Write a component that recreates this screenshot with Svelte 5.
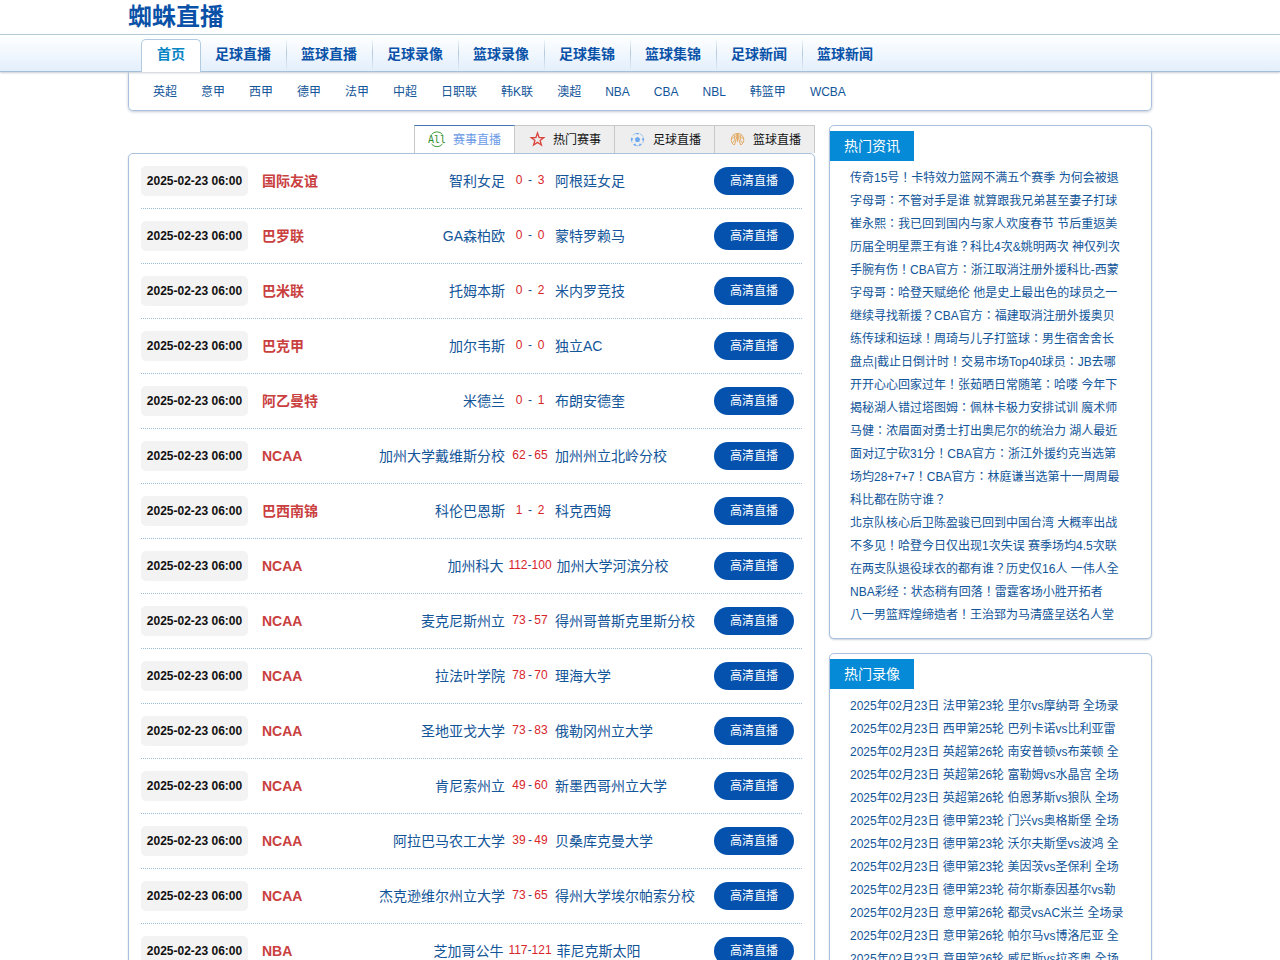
<script>
  const nav = ['首页', '足球直播', '篮球直播', '足球录像', '篮球录像', '足球集锦', '篮球集锦', '足球新闻', '篮球新闻'];
  const leagues = ['英超', '意甲', '西甲', '德甲', '法甲', '中超', '日职联', '韩K联', '澳超', 'NBA', 'CBA', 'NBL', '韩篮甲', 'WCBA'];
  const tabs = [
    { icon: 'all', label: '赛事直播' },
    { icon: 'star', label: '热门赛事' },
    { icon: 'football', label: '足球直播' },
    { icon: 'basketball', label: '篮球直播' }
  ];
  let active = $state(0);
  const date = '2025-02-23 06:00';
  const matches = [
    ['国际友谊', '智利女足', 0, 3, '阿根廷女足'],
    ['巴罗联', 'GA森柏欧', 0, 0, '蒙特罗赖马'],
    ['巴米联', '托姆本斯', 0, 2, '米内罗竞技'],
    ['巴克甲', '加尔韦斯', 0, 0, '独立AC'],
    ['阿乙曼特', '米德兰', 0, 1, '布朗安德奎'],
    ['NCAA', '加州大学戴维斯分校', 62, 65, '加州州立北岭分校'],
    ['巴西南锦', '科伦巴恩斯', 1, 2, '科克西姆'],
    ['NCAA', '加州科大', 112, 100, '加州大学河滨分校'],
    ['NCAA', '麦克尼斯州立', 73, 57, '得州哥普斯克里斯分校'],
    ['NCAA', '拉法叶学院', 78, 70, '理海大学'],
    ['NCAA', '圣地亚戈大学', 73, 83, '俄勒冈州立大学'],
    ['NCAA', '肯尼索州立', 49, 60, '新墨西哥州立大学'],
    ['NCAA', '阿拉巴马农工大学', 39, 49, '贝桑库克曼大学'],
    ['NCAA', '杰克逊维尔州立大学', 73, 65, '得州大学埃尔帕索分校'],
    ['NBA', '芝加哥公牛', 117, 121, '菲尼克斯太阳']
  ];
  const panels = [
    {
      title: '热门资讯',
      items: [
        '传奇15号！卡特效力篮网不满五个赛季 为何会被退',
        '字母哥：不管对手是谁 就算跟我兄弟甚至妻子打球',
        '崔永熙：我已回到国内与家人欢度春节 节后重返美',
        '历届全明星票王有谁？科比4次&姚明两次 神仅列次',
        '手腕有伤！CBA官方：浙江取消注册外援科比-西蒙',
        '字母哥：哈登天赋绝伦 他是史上最出色的球员之一',
        '继续寻找新援？CBA官方：福建取消注册外援奥贝',
        '练传球和运球！周琦与儿子打篮球：男生宿舍舍长',
        '盘点|截止日倒计时！交易市场Top40球员：JB去哪',
        '开开心心回家过年！张茹晒日常随笔：哈喽 今年下',
        '揭秘湖人错过塔图姆：佩林卡极力安排试训 魔术师',
        '马健：浓眉面对勇士打出奥尼尔的统治力 湖人最近',
        '面对辽宁砍31分！CBA官方：浙江外援约克当选第',
        '场均28+7+7！CBA官方：林庭谦当选第十一周周最',
        '科比都在防守谁？',
        '北京队核心后卫陈盈骏已回到中国台湾 大概率出战',
        '不多见！哈登今日仅出现1次失误 赛季场均4.5次联',
        '在两支队退役球衣的都有谁？历史仅16人 一伟人全',
        'NBA彩经：状态稍有回落！雷霆客场小胜开拓者',
        '八一男篮辉煌缔造者！王治郅为马清盛呈送名人堂'
      ]
    },
    {
      title: '热门录像',
      items: [
        '法甲第23轮 里尔vs摩纳哥 全场录',
        '西甲第25轮 巴列卡诺vs比利亚雷',
        '英超第26轮 南安普顿vs布莱顿 全',
        '英超第26轮 富勒姆vs水晶宫 全场',
        '英超第26轮 伯恩茅斯vs狼队 全场',
        '德甲第23轮 门兴vs奥格斯堡 全场',
        '德甲第23轮 沃尔夫斯堡vs波鸿 全',
        '德甲第23轮 美因茨vs圣保利 全场',
        '德甲第23轮 荷尔斯泰因基尔vs勒',
        '意甲第26轮 都灵vsAC米兰 全场录',
        '意甲第26轮 帕尔马vs博洛尼亚 全',
        '意甲第26轮 威尼斯vs拉齐奥 全场'
      ].map((t) => '2025年02月23日 ' + t)
    }
  ];
</script>

<header class="wrap"><h1>蜘蛛直播</h1></header>
<nav class="main-nav">
  <div class="wrap nav-items">
    {#each nav as item, i}
      <a href="#top" class:current={i === 0}>{item}</a>
    {/each}
  </div>
</nav>
<div class="wrap">
  <nav class="sub-nav">
    {#each leagues as item}<a href="#top">{item}</a>{/each}
  </nav>
  <div class="columns">
    <main>
      <div class="tabs">
        {#each tabs as tab, i}
          <button class="tab" class:active={active === i} onclick={() => (active = i)}>
            {#if tab.icon === 'all'}
              <svg class="icon" viewBox="0 0 18 18" fill="none" stroke="#3f9f3c" aria-hidden="true">
                <path d="M3.500 4.500A7 7 0 0 1 14.500 4.500M3.500 14A7 7 0 0 0 14.500 14" />
                <text x="9" y="13" text-anchor="middle" font-family="DejaVu Sans Mono, monospace" font-size="10" fill="#2f8f2e" stroke="none">All</text>
              </svg>
            {:else if tab.icon === 'star'}
              <svg class="icon" viewBox="0 0 18 18" fill="none" stroke="#d9443c" stroke-width="1.300">
                <path d="m9.500 3 1.600 4.500 4.700.1-3.700 2.900 1.300 4.500-3.900-2.600L5.600 15l1.300-4.500-3.700-2.900 4.700-.1z" />
              </svg>
            {:else if tab.icon === 'football'}
              <svg class="icon" viewBox="0 0 18 18" fill="#6faaf0">
                <circle cx="9.500" cy="9.500" r="6.200" fill="none" stroke="#9cc3ef" stroke-dasharray="4 3.800" />
                <path transform="translate(.5 .5)" d="m9 6.300 2.700 2-1 3.100H7.300l-1-3.100zM7 2.500h4L9 4.300zM2.600 7l2 1-.9 2.600-1.300-.9zM15.400 7l-2 1 .9 2.600 1.300-.9zM4.600 13.700l2.200-.7 1 2.300-1.300.2zM13.400 13.700l-2.200-.7-1 2.300 1.300.2z" />
              </svg>
            {:else}
              <svg class="icon" viewBox="0 0 18 18" fill="none" stroke="#e2aa62">
                <path d="M6 15A6.300 6.300 0 1 1 13 15M9.500 3.500V12M9.500 4 6.500 15M9.500 4l3 11M3.500 8.500C6.500 7.500 8.500 6 9.500 3.500c1 2.500 3 4 6 5M6 4.500C7.500 8 6.500 11 4.500 13M13 4.500c-1.500 3.500-.5 6.500 1.500 8.500" />
              </svg>
            {/if}
            <span>{tab.label}</span>
          </button>
        {/each}
      </div>
      <div class="panel matches">
        {#each matches as [league, home, hs, as, away]}
          <div class="match">
            <time>{date}</time>
            <strong>{league}</strong>
            <div class="teams">
              <a class="home" href="#top">{home}</a>
              <span class="score"><b>{hs}</b><i>-</i><b>{as}</b></span>
              <a href="#top">{away}</a>
            </div>
            <a class="watch" href="#top">高清直播</a>
          </div>
        {/each}
      </div>
    </main>
    <aside>
      {#each panels as panel}
        <section class="panel">
          <h2>{panel.title}</h2>
          <ul>
            {#each panel.items as item}<li><a href="#top">{item}</a></li>{/each}
          </ul>
        </section>
      {/each}
    </aside>
  </div>
</div>

<style>
  :global(body) {
    background: #fff;
    font: 12px 'Liberation Sans', 'Noto Sans CJK SC', sans-serif;
  }
  :global(html) {
    scrollbar-width: none;
  }
  a {
    color: #125599;
    text-decoration: none;
    white-space: nowrap;
  }
  .wrap {
    box-sizing: border-box;
    width: 100%;
    max-width: 1024px;
    margin: 0 auto;
  }
  h1 {
    margin: 0;
    color: #0952a8;
    font-size: 24px;
    line-height: 34px;
  }
  .main-nav {
    position: relative;
    border-top: 1px solid #b3cbd8;
    border-bottom: 1px solid #a5bfd9;
    background: linear-gradient(#fff, #e3effc);
    box-shadow: 0 1px 2px #c8cdd4;
  }
  .nav-items {
    display: flex;
    padding: 4px 13px 0;
  }
  .nav-items a {
    padding: 0 15px 2px 14px;
    border-right: 1px solid;
    border-image: linear-gradient(transparent, #b4c9de 45%, transparent) 1;
    color: #0952a8;
    font-size: 14px;
    font-weight: bold;
    line-height: 30px;
  }
  .nav-items a:last-child {
    border-image: none;
    border-color: transparent;
  }
  .nav-items a.current {
    margin-bottom: -1px;
    padding: 0 15px 4px;
    border: 1px solid #b3cbe0;
    border-bottom: 0;
    border-image: none;
    border-radius: 5px 5px 0 0;
    background: #fff;
    color: #0784c4;
    line-height: 28px;
  }
  .sub-nav {
    display: flex;
    gap: 24px;
    padding: 2px 24px 0;
    border: 1px solid #a9c1df;
    border-top: 0;
    border-radius: 0 0 5px 5px;
    box-shadow: 0 1px 3px #c4cbd4;
    line-height: 36px;
  }
  .columns {
    display: grid;
    grid-template-columns: minmax(0, 687fr) minmax(0, 323fr);
    gap: 14px;
    align-items: start;
    margin-top: 14px;
  }
  .tabs {
    display: flex;
    justify-content: flex-end;
  }
  .tab {
    display: flex;
    align-items: center;
    justify-content: center;
    gap: 7px;
    box-sizing: border-box;
    width: 101px;
    height: 28px;
    margin: 0 0 0 -1px;
    padding: 0 0 2px;
    border: 1px solid #c8c8c8;
    border-bottom: 0;
    background: #eee;
    color: #111;
    font: inherit;
  }
  .tab.active {
    z-index: 1;
    border-top-color: #4478b4;
    background: #fff;
    color: #6a9ae6;
  }
  .icon {
    width: 18px;
    height: 18px;
  }
  .panel {
    border: 1px solid #a9c1df;
    border-radius: 5px;
    background: #fff;
    box-shadow: 0 1px 2px #c8d0da;
  }
  .matches {
    padding: 0 12px;
  }
  .match {
    display: flex;
    align-items: center;
    height: 54px;
    padding-right: 8px;
    border-bottom: 1px dotted #9cbcdc;
  }
  time {
    width: 107px;
    margin-right: 14px;
    border-radius: 5px;
    background: #f3f3f3;
    color: #111;
    font-weight: bold;
    line-height: 30px;
    text-align: center;
    white-space: nowrap;
  }
  strong {
    width: 100px;
    color: #c9403f;
    font-size: 14px;
    line-height: 20px;
  }
  .teams {
    display: grid;
    flex: 1;
    grid-template-columns: 1fr auto 1fr;
    gap: 5px;
    align-items: center;
    font-size: 14px;
    line-height: 20px;
  }
  .home {
    text-align: right;
  }
  .score {
    display: flex;
    padding-bottom: 2px;
    color: #125599;
    font-size: 12px;
    text-align: center;
  }
  .score b {
    min-width: 18px;
    color: #d8252a;
    font-weight: normal;
  }
  .score i {
    font-style: normal;
  }
  .watch {
    width: 80px;
    margin-left: 16px;
    border-radius: 14px;
    background: #0452ad;
    color: #fff;
    line-height: 28px;
    text-align: center;
  }
  aside {
    display: grid;
    gap: 14px;
  }
  aside .panel {
    padding: 5px 0 11px;
  }
  h2 {
    width: max-content;
    margin: 0 0 6px;
    padding: 0 14px;
    background: #048ad6;
    color: #fff;
    font-size: 14px;
    font-weight: normal;
    line-height: 30px;
  }
  ul {
    margin: 0;
    padding: 0 20px;
    font-family: 'Liberation Sans', 'Noto Sans CJK TC', sans-serif;
    list-style: none;
  }
  li {
    height: 23px;
    line-height: 23px;
  }
</style>
